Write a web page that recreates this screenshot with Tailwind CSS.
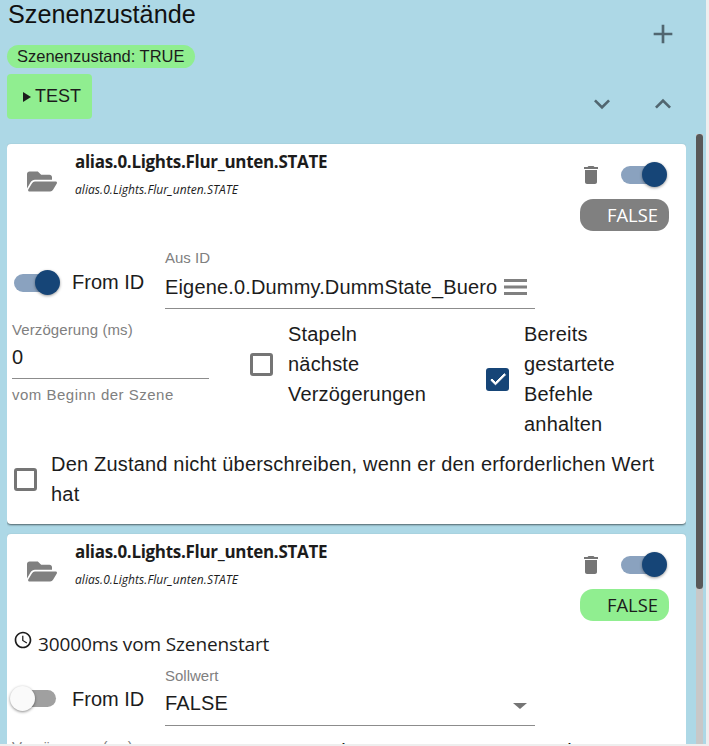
<!DOCTYPE html>
<html lang="de">
<head>
<meta charset="utf-8">
<script src="https://cdn.jsdelivr.net/npm/@tailwindcss/browser@4"></script>
</head>
<body class="m-0 bg-[#eeeeee] font-['Liberation_Sans',sans-serif] text-[#1c1c1c]">
<div class="w-[709px] h-[746px] overflow-hidden">
  <div class="w-[706px] h-[744px] bg-[#add8e6] flex flex-col overflow-hidden">
    <header class="h-[134px] shrink-0 flex justify-between pl-[7px]">
      <div class="flex flex-col items-start">
        <h1 class="text-[25.2px] leading-[28px] pl-px text-[#111] mb-[17px]">Szenenzustände</h1>
        <div class="h-[23px] px-[10px] rounded-full bg-[#90ee90] text-[16.5px] leading-[23px] mb-[6px]">Szenenzustand: TRUE</div>
        <button class="w-[85px] h-[45px] rounded bg-[#90ee90] flex items-center pl-[16px] text-[18px]">
          <svg width="8" height="10" viewBox="0 0 8 10" class="mr-[4px]"><path d="M0 0l8 5-8 5z" fill="#1c1c1c"/></svg>TEST
        </button>
      </div>
      <div class="w-[123px] mr-[27px] flex flex-col items-end">
        <svg class="mt-[18px]" width="32" height="32" viewBox="0 0 24 24"><path d="M19 13h-6v6h-2v-6H5v-2h6V5h2v6h6v2z" fill="#516670"/></svg>
        <div class="flex gap-[29px] mt-[38px]">
          <svg width="32" height="32" viewBox="0 0 24 24"><path d="M16.59 8.59 12 13.17 7.41 8.59 6 10l6 6 6-6z" fill="#516670"/></svg>
          <svg width="32" height="32" viewBox="0 0 24 24"><path d="M12 8l-6 6 1.41 1.41L12 10.83l4.59 4.58L18 14z" fill="#516670"/></svg>
        </div>
      </div>
    </header>
    <div class="flex-1 min-h-0 flex pl-[7px] pr-[3px]">
      <div class="w-[679px] shrink-0 pt-[10px] flex flex-col gap-[10px] overflow-hidden">
        <!-- card 1 -->
        <section class="h-[380px] shrink-0 bg-white rounded shadow-[0_1px_2px_rgba(0,0,0,0.55)]">
          <div class="h-[87px] flex">
            <svg class="ml-[20px] mt-[24px]" width="30" height="27" viewBox="0 0 576 512"><path fill="#808080" d="M572.694 292.093L500.27 416.248A63.997 63.997 0 0 1 444.989 448H45.025c-18.523 0-30.064-20.093-20.731-36.093l72.424-124.155A64 64 0 0 1 152 256h399.964c18.523 0 30.064 20.093 20.73 36.093zM152 224h328v-48c0-26.51-21.49-48-48-48H272l-64-64H48C21.49 64 0 85.49 0 112v278.046l69.077-118.418C86.214 242.25 117.989 224 152 224z"/></svg>
            <div class="ml-[18px] font-['Open_Sans',sans-serif]">
              <div class="mt-[7px] text-[17px] leading-[22px] font-bold tracking-[-0.3px] text-[#1c1c1c]">alias.0.Lights.Flur_unten.STATE</div>
              <div class="mt-[9px] text-[12px] leading-[16px] italic tracking-[0.06px] text-[#1c1c1c]">alias.0.Lights.Flur_unten.STATE</div>
            </div>
            <div class="ml-auto w-[122px] mr-[17px] flex flex-col items-end">
              <div class="flex items-center h-[25px] mt-[18px]">
                <svg width="24" height="24" viewBox="0 0 24 24" class="mr-[18px]"><path fill="#757575" d="M6 19c0 1.1.9 2 2 2h8c1.1 0 2-.9 2-2V7H6v12zM19 4h-3.5l-1-1h-5l-1 1H5v2h14V4z"/></svg>
                <div class="w-[46px] h-[25px] relative mr-[2px]">
                  <div class="absolute left-0 top-[4px] w-[40px] h-[18px] rounded-full bg-[#8aa2bf]"></div>
                  <div class="absolute right-0 top-0 w-[25px] h-[25px] rounded-full bg-[#164577] shadow-[0_1px_3px_rgba(0,0,0,0.4)]"></div>
                </div>
              </div>
              <div class="w-[89px] h-[32px] mt-[12px] rounded-[13px] bg-[#808080] text-white text-[18.4px] leading-[32px] font-['Open_Sans',sans-serif] text-right pr-[11px]">FALSE</div>
            </div>
          </div>
          <div class="flex pl-[7px] h-[81px]">
            <div class="w-[46px] h-[25px] relative mt-[39px]">
              <div class="absolute left-0 top-[4px] w-[42px] h-[18px] rounded-full bg-[#8aa2bf]"></div>
              <div class="absolute right-0 top-0 w-[25px] h-[25px] rounded-full bg-[#164577] shadow-[0_1px_3px_rgba(0,0,0,0.4)]"></div>
            </div>
            <div class="ml-[12px] w-[100px] text-[20px] leading-[24px] mt-[39px]">From ID</div>
            <div class="w-[370px] h-[78px] pt-[19px] ml-[-7px] border-b border-[#8c8c8c]">
              <div class="text-[15px] leading-[16px] text-[#808080]">Aus ID</div>
              <div class="flex items-center mt-[7px] h-[28px]">
                <span class="text-[20px] leading-[28px] whitespace-nowrap tracking-[0.16px]">Eigene.0.Dummy.DummState_Buero</span>
                <svg width="23" height="16" viewBox="0 0 23 16" class="ml-[7px] shrink-0"><path fill="#808080" d="M0 0h23v3H0zM0 6.5h23v3H0zM0 13h23v3H0z"/></svg>
              </div>
            </div>
          </div>
          <div class="flex h-[122px] pt-[8px]">
            <div class="ml-[5px] w-[197px] shrink-0">
              <div class="border-b border-[#8c8c8c] h-[59px] pt-[1px]">
                <div class="text-[15px] leading-[18px] text-[#808080] tracking-[0.1px]">Verzögerung (ms)</div>
                <div class="text-[20px] leading-[24px] mt-[6px]">0</div>
              </div>
              <div class="text-[15px] leading-[16px] mt-[8px] text-[#808080] tracking-[0.5px]">vom Beginn der Szene</div>
            </div>
            <div class="flex items-center ml-[41px] w-[236px] h-[88px]">
              <div class="w-[23px] h-[23px] rounded-[3px] border-[3px] border-[#757575] shrink-0"></div>
              <div class="ml-[15px] w-[140px] text-[20px] leading-[30px] tracking-[0.19px]">Stapeln nächste Verzögerungen</div>
            </div>
            <div class="flex items-center h-[118px] shrink-0">
              <div class="w-[23px] h-[23px] rounded-[3px] bg-[#164577] shrink-0 flex items-center justify-center">
                <svg width="20" height="20" viewBox="0 0 24 24"><path fill="#fff" d="M9 16.17 4.83 12l-1.42 1.41L9 19 21 7l-1.41-1.41z" stroke="#fff" stroke-width="1.2"/></svg>
              </div>
              <div class="ml-[15px] w-[110px] text-[20px] leading-[30px] tracking-[0.19px]">Bereits gestartete Befehle anhalten</div>
            </div>
          </div>
          <div class="flex items-center pl-[7px] h-[90px] pr-[20px]">
            <div class="w-[23px] h-[23px] rounded-[3px] border-[3px] border-[#757575] shrink-0"></div>
            <div class="ml-[14px] text-[20px] leading-[30px] tracking-[0.19px]">Den Zustand nicht überschreiben, wenn er den erforderlichen Wert hat</div>
          </div>
        </section>
        <!-- card 2 -->
        <section class="h-[380px] shrink-0 bg-white rounded shadow-[0_1px_2px_rgba(0,0,0,0.55)]">
          <div class="h-[87px] flex">
            <svg class="ml-[20px] mt-[24px]" width="30" height="27" viewBox="0 0 576 512"><path fill="#808080" d="M572.694 292.093L500.27 416.248A63.997 63.997 0 0 1 444.989 448H45.025c-18.523 0-30.064-20.093-20.731-36.093l72.424-124.155A64 64 0 0 1 152 256h399.964c18.523 0 30.064 20.093 20.73 36.093zM152 224h328v-48c0-26.51-21.49-48-48-48H272l-64-64H48C21.49 64 0 85.49 0 112v278.046l69.077-118.418C86.214 242.25 117.989 224 152 224z"/></svg>
            <div class="ml-[18px] font-['Open_Sans',sans-serif]">
              <div class="mt-[7px] text-[17px] leading-[22px] font-bold tracking-[-0.3px] text-[#1c1c1c]">alias.0.Lights.Flur_unten.STATE</div>
              <div class="mt-[9px] text-[12px] leading-[16px] italic tracking-[0.06px] text-[#1c1c1c]">alias.0.Lights.Flur_unten.STATE</div>
            </div>
            <div class="ml-auto w-[122px] mr-[17px] flex flex-col items-end">
              <div class="flex items-center h-[25px] mt-[18px]">
                <svg width="24" height="24" viewBox="0 0 24 24" class="mr-[18px]"><path fill="#757575" d="M6 19c0 1.1.9 2 2 2h8c1.1 0 2-.9 2-2V7H6v12zM19 4h-3.5l-1-1h-5l-1 1H5v2h14V4z"/></svg>
                <div class="w-[46px] h-[25px] relative mr-[2px]">
                  <div class="absolute left-0 top-[4px] w-[40px] h-[18px] rounded-full bg-[#8aa2bf]"></div>
                  <div class="absolute right-0 top-0 w-[25px] h-[25px] rounded-full bg-[#164577] shadow-[0_1px_3px_rgba(0,0,0,0.4)]"></div>
                </div>
              </div>
              <div class="w-[89px] h-[32px] mt-[12px] rounded-[13px] bg-[#90ee90] text-[#1c1c1c] text-[18.4px] leading-[32px] font-['Open_Sans',sans-serif] text-right pr-[11px]">FALSE</div>
            </div>
          </div>
          <div class="flex items-center h-[20px] pl-[6px] mt-[13px] font-['Open_Sans',sans-serif] text-[19px] tracking-[-0.13px]">
            <svg width="20" height="20" viewBox="0 0 24 24" class="-mt-[8px] mr-[5px]"><path fill="#1c1c1c" d="M11.99 2C6.47 2 2 6.48 2 12s4.47 10 9.99 10C17.52 22 22 17.52 22 12S17.52 2 11.99 2zM12 20c-4.42 0-8-3.58-8-8s3.58-8 8-8 8 3.58 8 8-3.58 8-8 8zm.5-13H11v6l5.25 3.15.75-1.23-4.5-2.67z"/></svg>
            30000ms vom Szenenstart
          </div>
          <div class="flex pl-[3px] h-[72px]">
            <div class="w-[46px] h-[25px] relative mt-[32px]">
              <div class="absolute left-[5px] top-[4px] w-[41px] h-[17px] rounded-full bg-[#a0a0a0]"></div>
              <div class="absolute left-0 top-0 w-[25px] h-[25px] rounded-full bg-[#fafafa] shadow-[0_1px_3px_rgba(0,0,0,0.45)]"></div>
            </div>
            <div class="ml-[16px] w-[100px] text-[20px] leading-[24px] mt-[33px]">From ID</div>
            <div class="w-[370px] h-[72px] pt-[14px] ml-[-7px] border-b border-[#8c8c8c] relative">
              <div class="text-[15px] leading-[16px] text-[#808080]">Sollwert</div>
              <div class="text-[20px] leading-[28px] mt-[5px] tracking-[0.16px]">FALSE</div>
              <svg width="14" height="6" viewBox="0 0 14 6" class="absolute right-[8px] top-[49px]"><path d="M0 0h14l-7 6z" fill="#757575"/></svg>
            </div>
          </div>
          <div class="flex h-[122px] pt-[11px]">
            <div class="ml-[5px] w-[197px] shrink-0 pt-[1px]">
              <div class="text-[15px] leading-[18px] text-[#808080] tracking-[0.1px]">Verzögerung (ms)</div>
            </div>
            <div class="ml-[79px] text-[20px] leading-[30px] -mt-[1px] tracking-[0.19px]">Stapeln</div>
            <div class="ml-[167px] text-[20px] leading-[30px] -mt-[1px] tracking-[0.19px]">Bereits</div>
          </div>
        </section>
      </div>
      <div class="ml-[10px] w-[7px] h-full bg-[#c8c8c8] shrink-0">
        <div class="h-[455px] bg-[#585858] rounded-full"></div>
      </div>
    </div>
  </div>
</div>
</body>
</html>
